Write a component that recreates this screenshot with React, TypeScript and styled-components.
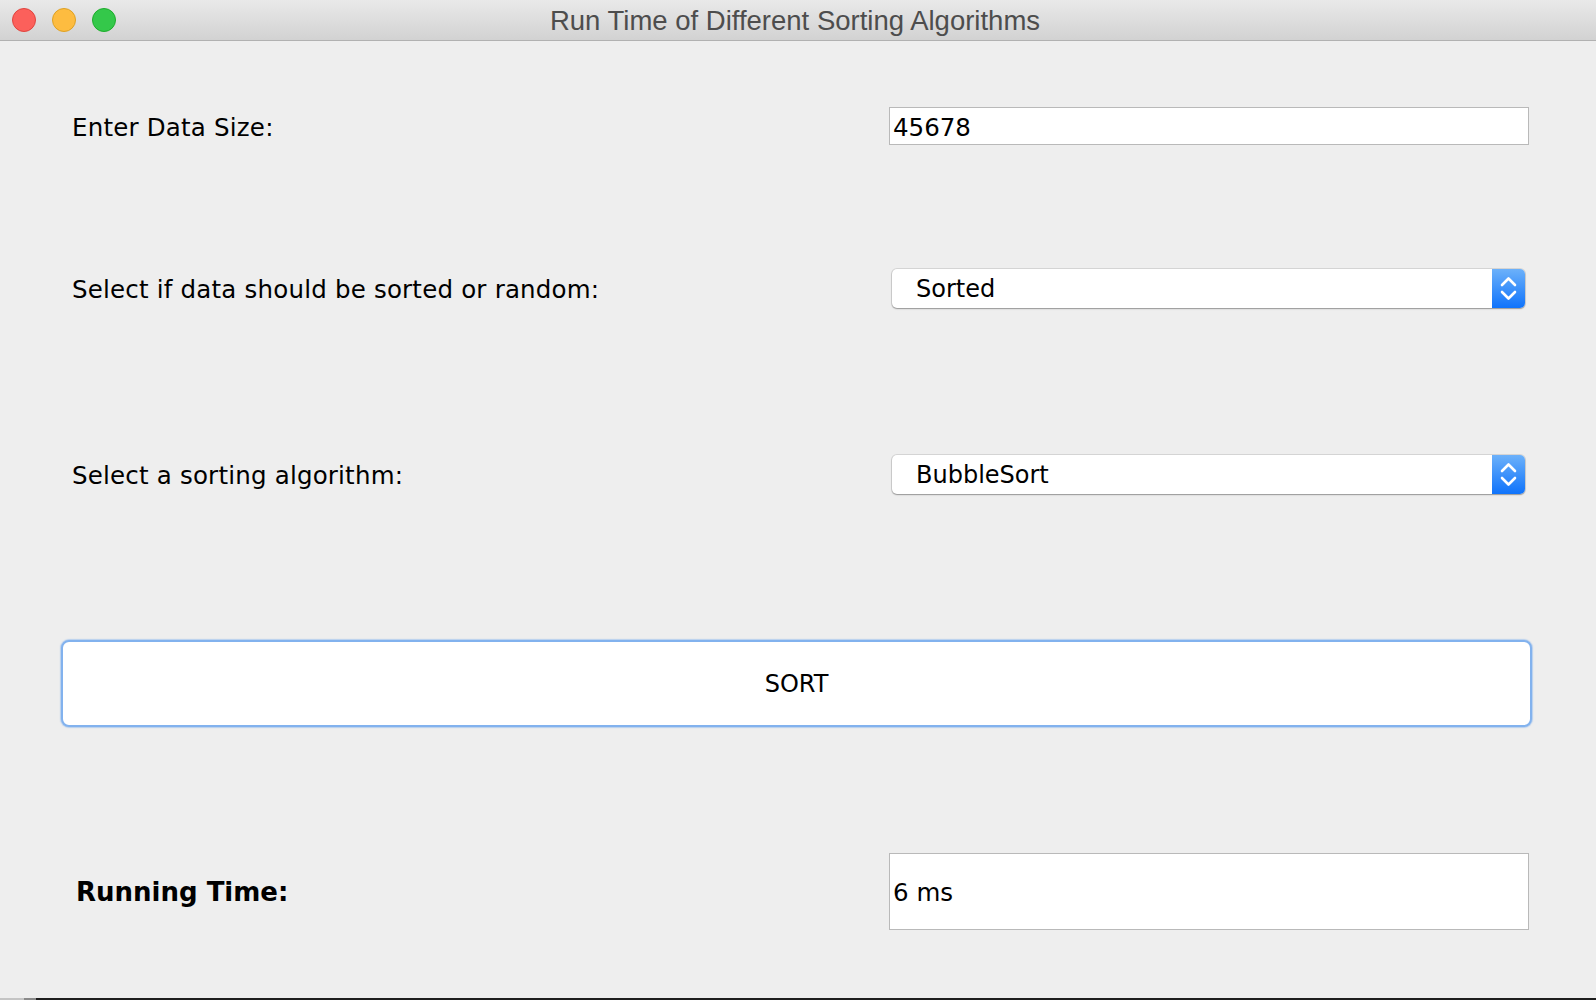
import React from "react";
import styled, { createGlobalStyle } from "styled-components";

const GlobalStyle = createGlobalStyle`
  html, body { margin: 0; padding: 0; background: #eeeeee; }
  body { width: 1596px; height: 1000px; overflow: hidden; }
  #root { height: 100%; }
`;

const Window = styled.div`
  display: flex;
  flex-direction: column;
  width: 1596px;
  height: 1000px;
  background: #eeeeee;
  font-family: "DejaVu Sans", "Lucida Grande", sans-serif;
  color: #000;
`;

const TitleBar = styled.div`
  position: relative;
  flex: 0 0 40px;
  display: flex;
  align-items: center;
  justify-content: center;
  background: linear-gradient(#e9e9e9, #d2d2d2);
  border-bottom: 1px solid #b1b1b1;
`;

const Lights = styled.div`
  position: absolute;
  left: 12px;
  top: 8px;
  display: flex;
  gap: 16px;
`;

const Light = styled.span<{ $fill: string; $edge: string }>`
  width: 22px;
  height: 22px;
  border-radius: 50%;
  background: ${(p) => p.$fill};
  border: 1px solid ${(p) => p.$edge};
`;

const Title = styled.div`
  font-family: "Liberation Sans", Arial, sans-serif;
  font-size: 27.5px;
  color: #4d4d4d;
  margin-left: -6px;
  margin-top: 1px;
`;

const Content = styled.div`
  flex: 1;
  display: flex;
  flex-direction: column;
`;

const Row = styled.div<{ $top: number; $h: number }>`
  display: flex;
  align-items: center;
  margin-top: ${(p) => p.$top}px;
  height: ${(p) => p.$h}px;
`;

const Label = styled.div<{ $bold?: boolean }>`
  flex: 0 0 ${(p) => (p.$bold ? 885 : 889)}px;
  padding-left: ${(p) => (p.$bold ? 76 : 72)}px;
  padding-top: ${(p) => (p.$bold ? 0 : 2)}px;
  box-sizing: border-box;
  font-size: ${(p) => (p.$bold ? 26 : 24.5)}px;
  font-weight: ${(p) => (p.$bold ? 700 : 400)};
  letter-spacing: ${(p) => (p.$bold ? 0 : 0.2)}px;
  margin-right: ${(p) => (p.$bold ? 4 : 0)}px;
`;

const Field = styled.div<{ $h: number }>`
  box-sizing: border-box;
  width: 640px;
  height: ${(p) => p.$h}px;
  background: #fff;
  border: 1px solid #b9b9b9;
  display: flex;
  align-items: center;
  padding-left: 3px;
  padding-top: 2px;
  font-size: 24.5px;
`;

const Combo = styled.div`
  box-sizing: border-box;
  margin-left: 3px;
  width: 633px;
  height: 39px;
  display: flex;
  align-items: stretch;
  background: #fff;
  border-radius: 5px;
  box-shadow: 0 0 0 1px rgba(0, 0, 0, 0.1), 0 1px 1.5px rgba(0, 0, 0, 0.3);
  overflow: hidden;
`;

const ComboText = styled.div`
  flex: 1;
  display: flex;
  align-items: center;
  padding-left: 24px;
  font-size: 24px;
`;

const ComboArrows = styled.div`
  flex: 0 0 33px;
  display: flex;
  align-items: center;
  justify-content: center;
  background: linear-gradient(#6cb1fa, #0f73fb);
`;

const SortButton = styled.button`
  box-sizing: border-box;
  margin-left: 61px;
  width: 1471px;
  height: 87px;
  background: #fff;
  border: 2px solid #82b2ee;
  border-radius: 8px;
  box-shadow: 0 0 1px 1px rgba(130, 178, 238, 0.5);
  font-family: "DejaVu Sans", "Lucida Grande", sans-serif;
  font-size: 24px;
  color: #000;
  padding: 0;
`;

const BottomEdge = styled.div`
  flex: 0 0 2px;
  background: linear-gradient(90deg, #c4c4c4 0, #c4c4c4 24px, #8a8a8a 24px, #8a8a8a 36px, #1e1e1e 36px);
`;

const Chevrons = () => (
  <svg width="33" height="39" viewBox="0 0 33 39">
    <path d="M10 16 L16.5 9.5 L23 16" fill="none" stroke="#fff" strokeWidth="2.6" strokeLinecap="round" strokeLinejoin="round" />
    <path d="M10 23 L16.5 29.5 L23 23" fill="none" stroke="#fff" strokeWidth="2.6" strokeLinecap="round" strokeLinejoin="round" />
  </svg>
);

export default function App() {
  return (
    <>
      <GlobalStyle />
      <Window>
        <TitleBar>
          <Lights>
            <Light $fill="#fc605b" $edge="#e0443e" />
            <Light $fill="#fdbc40" $edge="#dea123" />
            <Light $fill="#34c84a" $edge="#1dad2b" />
          </Lights>
          <Title>Run Time of Different Sorting Algorithms</Title>
        </TitleBar>
        <Content>
          <Row $top={66} $h={38}>
            <Label>Enter Data Size:</Label>
            <Field $h={38}>45678</Field>
          </Row>
          <Row $top={124} $h={39}>
            <Label>Select if data should be sorted or random:</Label>
            <Combo>
              <ComboText>Sorted</ComboText>
              <ComboArrows>
                <Chevrons />
              </ComboArrows>
            </Combo>
          </Row>
          <Row $top={147} $h={39}>
            <Label>Select a sorting algorithm:</Label>
            <Combo>
              <ComboText>BubbleSort</ComboText>
              <ComboArrows>
                <Chevrons />
              </ComboArrows>
            </Combo>
          </Row>
          <Row $top={146} $h={87}>
            <SortButton>SORT</SortButton>
          </Row>
          <Row $top={126} $h={77}>
            <Label $bold>Running Time:</Label>
            <Field $h={77}>6 ms</Field>
          </Row>
        </Content>
        <BottomEdge />
      </Window>
    </>
  );
}
